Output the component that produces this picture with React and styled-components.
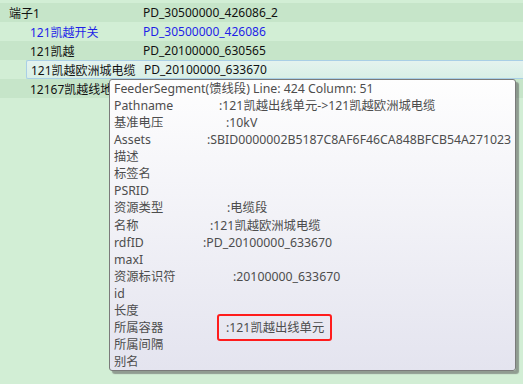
import styled, { createGlobalStyle } from 'styled-components';

const GlobalStyle = createGlobalStyle`
  html, body {
    margin: 0;
    padding: 0;
    background: #d2eed5;
    font-family: "Noto Sans", "Noto Sans CJK SC", sans-serif;
  }
`;

const Page = styled.div`
  position: relative;
  width: 523px;
  height: 384px;
  overflow: hidden;
  background: #d2eed5;
`;

const List = styled.div`
  display: flex;
  flex-direction: column;
  padding-top: 3px;
`;

const Row = styled.div`
  display: flex;
  align-items: center;
  height: 19px;
  box-sizing: border-box;
  font-size: 12px;
  color: ${p => (p.$blue ? '#1f1fe8' : '#111')};
  background: ${p => (p.$dark ? '#c6e5c9' : '#d2eed5')};
  ${p =>
    p.$selected &&
    `
    background: linear-gradient(#e4f3ee, #d8efe6);
    border: 1px solid #a9cfe6;
    border-right: 0;
    border-radius: 2px 0 0 2px;
    margin-left: 26px;
  `}
`;

const Name = styled.div`
  width: ${p => p.$w}px;
  padding-left: ${p => p.$indent}px;
  flex-shrink: 0;
  white-space: nowrap;
  box-sizing: border-box;
`;

const Id = styled.div`
  white-space: nowrap;
`;

const Tip = styled.div`
  position: absolute;
  left: 109px;
  top: 79px;
  width: 407px;
  height: 292px;
  box-sizing: border-box;
  padding: 0 0 0 4px;
  border: 1px solid #7a7a7a;
  border-radius: 3px;
  background: linear-gradient(#fefefe, #e4e4ef);
  box-shadow: 3px 3px 1px rgba(90, 90, 90, 0.55);
  color: #4d4d4d;
  font-size: 12.3px;
  display: flex;
  flex-direction: column;
`;

const Line = styled.div`
  display: flex;
  height: 17.2px;
  line-height: 17px;
  white-space: nowrap;
`;

const Label = styled.span`
  width: ${p => p.$w}px;
  flex-shrink: 0;
`;

const Highlight = styled.span`
  display: inline-block;
  margin: -5px 0 -5px 0;
  padding: 3px 6px 3px 7px;
  border: 2px solid #ff1c1c;
  border-radius: 3px;
  line-height: 17px;
`;

const rows = [
  { name: '端子1', id: 'PD_30500000_426086_2', dark: true, indent: 9 },
  { name: '121凯越开关', id: 'PD_30500000_426086', blue: true, indent: 30 },
  { name: '121凯越', id: 'PD_20100000_630565', dark: true, indent: 30 },
  { name: '121凯越欧洲城电缆', id: 'PD_20100000_633670', selected: true, indent: 4 },
  { name: '12167凯越线地', id: '', dark: true, indent: 30 },
];

const props = [
  { label: 'Pathname', at: 105, value: ':121凯越出线单元->121凯越欧洲城电缆' },
  { label: '基准电压', at: 112, value: ':10kV' },
  { label: 'Assets', at: 93, value: ':SBID0000002B5187C8AF6F46CA848BFCB54A271023' },
  { label: '描述' },
  { label: '标签名' },
  { label: 'PSRID' },
  { label: '资源类型', at: 113, value: ':电缆段' },
  { label: '名称', at: 96, value: ':121凯越欧洲城电缆' },
  { label: 'rdfID', at: 89, value: ':PD_20100000_633670' },
  { label: 'maxI' },
  { label: '资源标识符', at: 119, value: ':20100000_633670' },
  { label: 'id' },
  { label: '长度' },
  { label: '所属容器', at: 103, value: ':121凯越出线单元', boxed: true },
  { label: '所属间隔' },
  { label: '别名' },
];

export default function App() {
  return (
    <Page>
      <GlobalStyle />
      <List>
        {rows.map(r => (
          <Row key={r.name} $dark={r.dark} $blue={r.blue} $selected={r.selected}>
            <Name $w={r.selected ? 117 : 143} $indent={r.indent}>{r.name}</Name>
            <Id>{r.id}</Id>
          </Row>
        ))}
      </List>
      <Tip>
        <Line>FeederSegment(馈线段) Line: 424 Column: 51</Line>
        {props.map(p => (
          <Line key={p.label}>
            <Label $w={p.at || 0}>{p.label}</Label>
            {p.boxed ? <Highlight>{p.value}</Highlight> : p.value}
          </Line>
        ))}
      </Tip>
    </Page>
  );
}
